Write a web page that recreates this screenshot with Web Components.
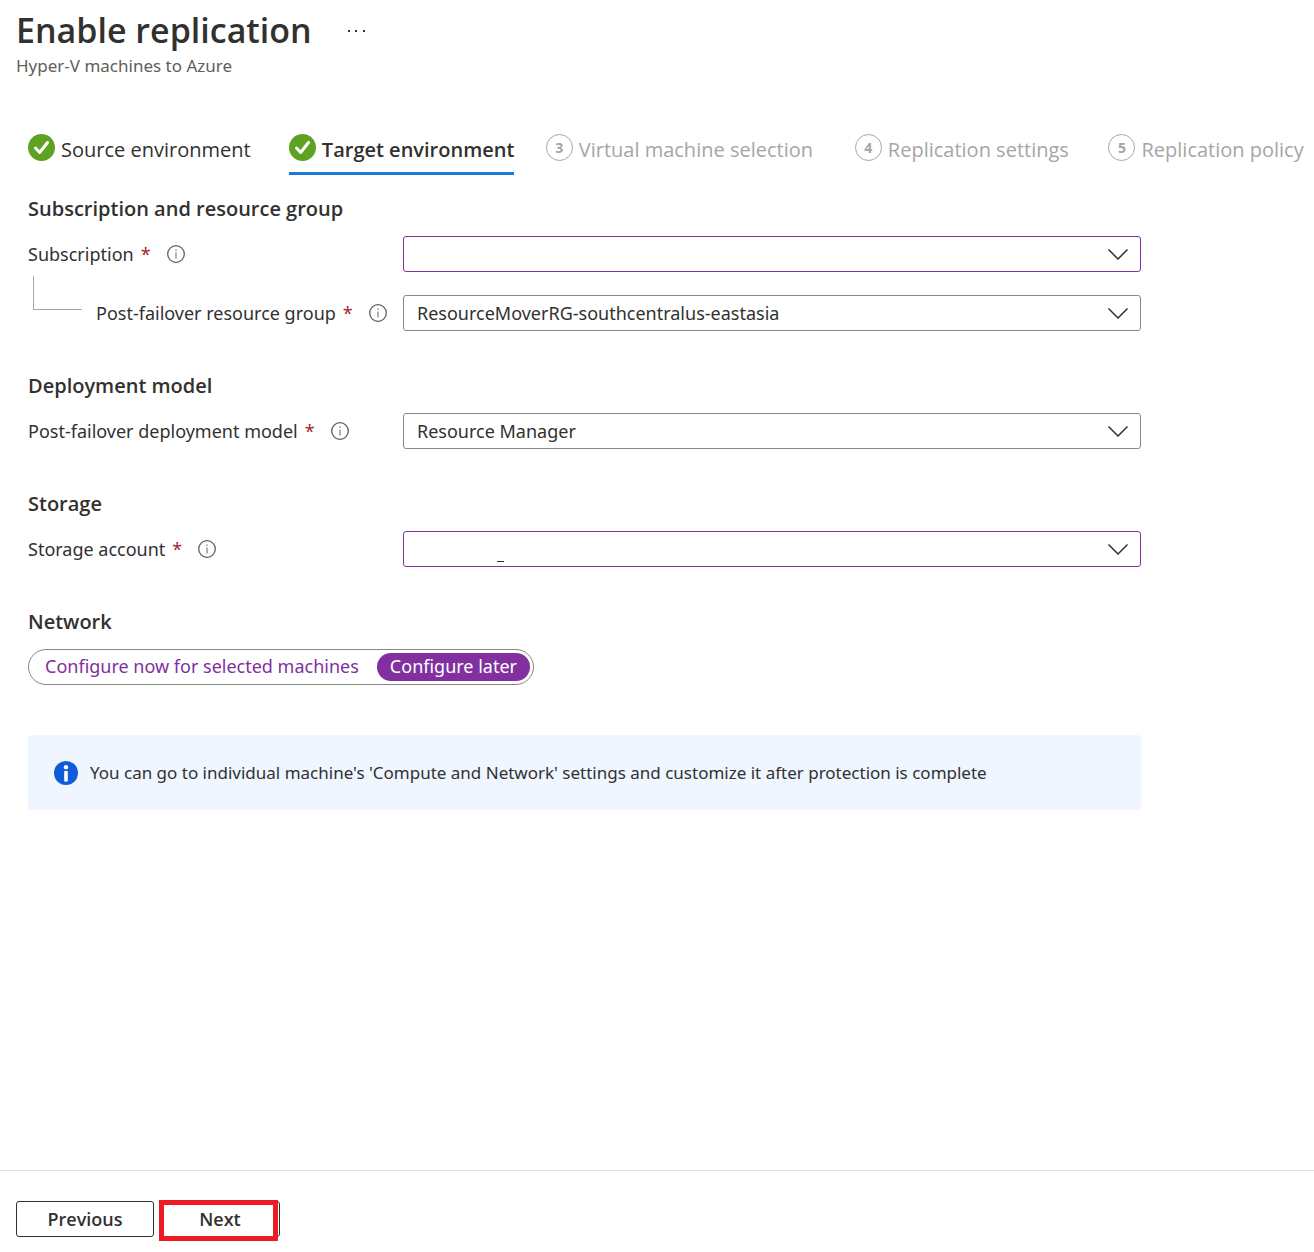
<!DOCTYPE html>
<html lang="en">
<head>
<meta charset="utf-8">
<title>Enable replication</title>
<style>
  body { margin: 0; background: #fff; color: #323130; font-family: "Noto Sans", "Open Sans", sans-serif; font-size: 18px; line-height: 24px; }
</style>
</head>
<body>
<replication-page></replication-page>
<script>
const define = (name, html, setup) => {
  const template = document.createElement('template');
  template.innerHTML = '<style>*{box-sizing:border-box}</style>' + html;
  customElements.define(name, class extends HTMLElement {
    constructor() {
      super();
      this.attachShadow({ mode: 'open' }).append(template.content.cloneNode(true));
    }
    connectedCallback() { if (setup) setup(this, this.shadowRoot); }
  });
};

define('blade-header', `
<style>
  :host { display: block; padding: 8px 16px 0; }
  .top { display: flex; align-items: center; gap: 35px; }
  h1 { margin: 0; font-family: "Open Sans", sans-serif; font-size: 34px; line-height: 44px; font-weight: 600; }
  p { margin: 2px 0 0; font-size: 17px; line-height: 24px; color: #605e5c; }
  button { border: 0; padding: 0; background: none; display: flex; }
</style>
<div class="top">
  <h1><slot></slot></h1>
  <button aria-label="More actions"><svg width="20" height="6" viewBox="0 0 20 6" fill="#323130"><path d="M1 3h2v2H1zM8 3h2v2H8zM16 3h2v2h-2z"/></svg></button>
</div>
<p><slot name="subtitle"></slot></p>`);

define('wizard-step', `
<style>
  :host { display: block; font-family: "Open Sans", sans-serif; }
  a { display: flex; gap: 6px; height: 41px; font-size: 20px; line-height: 32px; color: #323130; text-decoration: none; white-space: nowrap; }
  svg, .num { flex: none; width: 27px; height: 27px; }
  .num { border: 1px solid #a6a6a6; border-radius: 50%; font-size: 14px; line-height: 25px; font-weight: 700; text-align: center; display: none; }
  /* every step keeps the width of its bold state, so the bar does not move when a step becomes active */
  .text { display: grid; align-content: start; }
  .text::after { content: attr(data-text); height: 0; overflow: hidden; visibility: hidden; font-weight: 600; }
  :host([pending]) a { color: #a6a6a6; }
  :host([pending]) .num { display: block; }
  :host([pending]) svg { display: none; }
  :host([active]) a { font-weight: 600; border-bottom: 3px solid #1a7ad4; }
</style>
<a href="#">
  <svg viewBox="0 0 27 27"><circle cx="13.500" cy="13.500" r="13.500" fill="#5ea224"/><path d="M7.500 14l4.200 4.500 7.800-10" fill="none" stroke="#fff" stroke-width="3" stroke-linecap="round" stroke-linejoin="round"/></svg>
  <span class="num"></span>
  <span class="text"><span><slot></slot></span></span>
</a>`, (host, root) => {
  root.querySelector('.num').textContent = host.getAttribute('pending') || '';
  root.querySelector('.text').dataset.text = host.textContent;
});

define('wizard-steps', `
<style>
  :host { display: block; padding: 56px 3px 0 28px; }
  nav { display: flex; justify-content: space-between; }
</style>
<nav aria-label="Steps"><slot></slot></nav>`);

define('form-section', `
<style>
  :host { display: block; }
  h2 { margin: 0 0 15px; font-family: "Open Sans", sans-serif; font-size: 20px; line-height: 24px; font-weight: 600; }
  .rows { display: grid; gap: 23px; }
</style>
<section><h2><slot name="heading"></slot></h2><div class="rows"><slot></slot></div></section>`);

define('select-field', `
<style>
  :host { display: grid; grid-template-columns: 375px 1fr; align-items: center; }
  .lead { display: flex; align-items: center; height: 36px; white-space: nowrap; }
  .branch { display: none; width: 49px; height: 34px; margin: -19px 14px 0 5px; align-self: flex-start; border: solid #a6a6a6; border-width: 0 0 1px 1px; }
  :host([nested]) .branch { display: block; }
  .star { color: #a4262c; margin-left: 7px; }
  .info { flex: none; margin-left: 16px; }
  .box { display: grid; align-items: center; }
  .box > * { grid-area: 1 / 1; }
  select { appearance: none; width: 100%; height: 36px; margin: 0; padding: 0 40px 0 13px; border: 1px solid #8a8886; border-radius: 3px; background: #fff; color: inherit; font: inherit; }
  :host([changed]) select { border-color: #8230a0; }
  .chev { justify-self: end; margin-right: 12px; pointer-events: none; }
  .trace { display: none; align-self: end; width: 7px; height: 1px; margin: 0 0 5px 94px; background: #323130; pointer-events: none; }
  :host([trace]) .trace { display: block; }
</style>
<div class="lead">
  <span class="branch"></span>
  <label for="choice"><slot></slot><span class="star">*</span></label>
  <svg class="info" width="18" height="18" viewBox="0 0 18 18"><circle cx="9" cy="9" r="8.300" fill="none" stroke="#605e5c" stroke-width="1.300"/><path d="M9 7.500v6M9 4.500v1.500" stroke="#8a8886" stroke-width="1.300"/></svg>
</div>
<div class="box">
  <select id="choice"><option></option></select>
  <svg class="chev" width="22" height="12" viewBox="0 0 22 12"><path d="M1.500 1.500L11 11l9.500-9.500" fill="none" stroke="#323130" stroke-width="1.500"/></svg>
  <span class="trace"></span>
</div>`, (host, root) => { root.querySelector('option').textContent = host.getAttribute('value') || ''; });

define('network-choice', `
<style>
  :host { display: block; }
  fieldset { display: inline-flex; align-items: center; height: 36px; margin: 0; padding: 0 3px; border: 1px solid #8a8886; border-radius: 18px; vertical-align: top; }
  label { display: block; height: 28px; line-height: 26px; padding: 0 13px; border-radius: 14px; color: #8230a0; white-space: nowrap; }
  label:has(:checked) { background: #8230a0; color: #fff; margin-left: 5px; }
  input { appearance: none; position: absolute; margin: 0; width: 0; height: 0; }
</style>
<fieldset aria-label="Network">
  <label><input type="radio" name="net">Configure now for selected machines</label>
  <label><input type="radio" name="net" checked>Configure later</label>
</fieldset>`);

define('info-banner', `
<style>
  :host { display: flex; align-items: center; gap: 12px; padding: 25px 26px; min-height: 75px; box-sizing: border-box; border-radius: 3px; background: #eff6ff; font-size: 17px; }
  svg { flex: none; }
</style>
<svg width="24" height="24" viewBox="0 0 24 24"><circle cx="12" cy="12" r="12" fill="#0f5bd8"/><circle cx="12" cy="6.200" r="2.200" fill="#fff"/><path d="M10.200 10h3.600v10.500h-3.600z" fill="#fff"/></svg>
<span><slot></slot></span>`);

define('wizard-footer', `
<style>
  :host { display: flex; gap: 6px; padding: 30px 16px 15px; border-top: 1px solid #e1dfdd; }
  button { height: 36px; padding: 0; border: 1px solid #323130; border-radius: 3px; background: #fff; color: #323130; font: 600 18px/24px "Open Sans", sans-serif; }
  .prev { width: 138px; }
  .next { position: relative; width: 120px; }
  .next::after { content: ""; position: absolute; inset: -2px 1px -5px -2px; border: 5px solid #ed1c24; }
</style>
<button class="prev">Previous</button><button class="next">Next</button>`);

define('replication-page', `
<style>
  :host { display: flex; flex-direction: column; min-height: 100vh; }
  main { flex: 1; }
  form { display: grid; gap: 43px; max-width: 1113px; margin: 22px 28px 0; }
  info-banner { margin-top: 7px; }
</style>
<blade-header>Enable replication<span slot="subtitle">Hyper-V machines to Azure</span></blade-header>
<main>
  <wizard-steps>
    <wizard-step>Source environment</wizard-step>
    <wizard-step active>Target environment</wizard-step>
    <wizard-step pending="3">Virtual machine selection</wizard-step>
    <wizard-step pending="4">Replication settings</wizard-step>
    <wizard-step pending="5">Replication policy</wizard-step>
  </wizard-steps>
  <form>
    <form-section><span slot="heading">Subscription and resource group</span>
      <select-field changed>Subscription</select-field>
      <select-field nested value="ResourceMoverRG-southcentralus-eastasia">Post-failover resource group</select-field>
    </form-section>
    <form-section><span slot="heading">Deployment model</span>
      <select-field value="Resource Manager">Post-failover deployment model</select-field>
    </form-section>
    <form-section><span slot="heading">Storage</span>
      <select-field changed trace>Storage account</select-field>
    </form-section>
    <form-section><span slot="heading">Network</span>
      <network-choice></network-choice>
    </form-section>
    <info-banner>You can go to individual machine's 'Compute and Network' settings and customize it after protection is complete</info-banner>
  </form>
</main>
<wizard-footer></wizard-footer>`);
</script>
</body>
</html>
